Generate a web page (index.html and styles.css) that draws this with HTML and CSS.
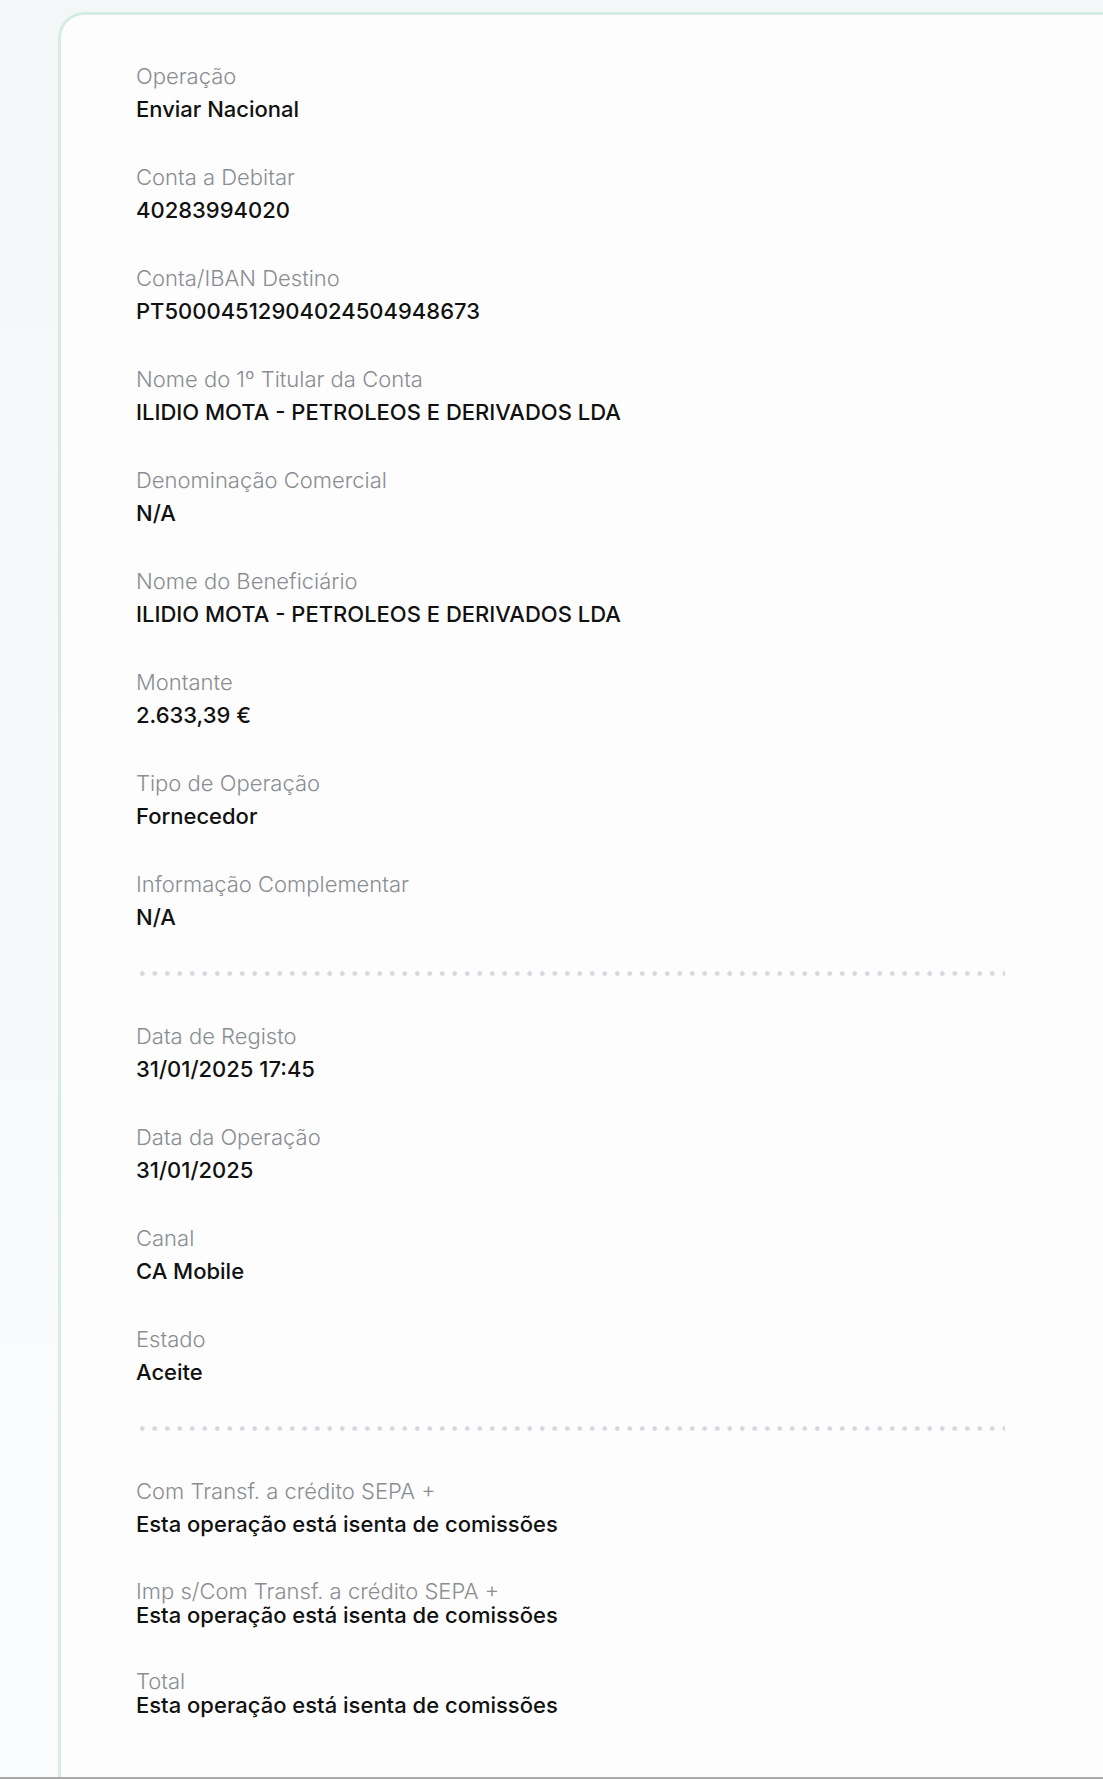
FILE: index.html
```html
<!DOCTYPE html>
<html lang="pt">
<head>
  <meta charset="UTF-8">
  <meta name="viewport" content="width=device-width, initial-scale=1.0">
  <title>Detalhe da Operação</title>
  <link rel="stylesheet" href="styles.css">
</head>
<body>

<div class="details-card">

  <div class="detail">
    <p class="label">Operação</p>
    <p class="value">Enviar Nacional</p>
  </div>
  <div class="detail">
    <p class="label">Conta a Debitar</p>
    <p class="value">40283994020</p>
  </div>
  <div class="detail">
    <p class="label">Conta/IBAN Destino</p>
    <p class="value">PT50004512904024504948673</p>
  </div>
  <div class="detail">
    <p class="label">Nome do 1º Titular da Conta</p>
    <p class="value">ILIDIO MOTA - PETROLEOS E DERIVADOS LDA</p>
  </div>
  <div class="detail">
    <p class="label">Denominação Comercial</p>
    <p class="value">N/A</p>
  </div>
  <div class="detail">
    <p class="label">Nome do Beneficiário</p>
    <p class="value">ILIDIO MOTA - PETROLEOS E DERIVADOS LDA</p>
  </div>
  <div class="detail">
    <p class="label">Montante</p>
    <p class="value">2.633,39 €</p>
  </div>
  <div class="detail">
    <p class="label">Tipo de Operação</p>
    <p class="value">Fornecedor</p>
  </div>
  <div class="detail">
    <p class="label">Informação Complementar</p>
    <p class="value">N/A</p>
  </div>

  <div class="separator"></div>

  <div class="detail">
    <p class="label">Data de Registo</p>
    <p class="value">31/01/2025 17:45</p>
  </div>
  <div class="detail">
    <p class="label">Data da Operação</p>
    <p class="value">31/01/2025</p>
  </div>
  <div class="detail">
    <p class="label">Canal</p>
    <p class="value">CA Mobile</p>
  </div>
  <div class="detail">
    <p class="label">Estado</p>
    <p class="value">Aceite</p>
  </div>

  <div class="separator"></div>

  <div class="detail">
    <p class="label">Com Transf. a crédito SEPA +</p>
    <p class="value">Esta operação está isenta de comissões</p>
  </div>
  <div class="detail tight">
    <p class="label">Imp s/Com Transf. a crédito SEPA +</p>
    <p class="value">Esta operação está isenta de comissões</p>
  </div>
  <div class="detail tight">
    <p class="label">Total</p>
    <p class="value">Esta operação está isenta de comissões</p>
  </div>

</div>

</body>
</html>
```

FILE: styles.css
```css
body {
  font-family: Inter, "Noto Sans", Arial, sans-serif;
  margin: 0;
  height: 1779px;
  overflow: hidden;
  box-sizing: border-box;
  padding: 12px 0 0 58px;
  border-bottom: 2px solid #a9a9a9;
  background: linear-gradient(180deg, #f4f7f8 0%, #f6fafb 40%, #fafbfc 100%);
}

.details-card {
  height: 100%;
  box-sizing: border-box;
  padding: 48px 0 0 75px;
  background: #fdfdfd;
  border: 3px solid #d6ece2;
  border-right: none;
  border-bottom: none;
  border-radius: 26px 0 0 0;
}

.detail {
  width: 869px;
  margin-bottom: 42px;
}

.detail p {
  margin: 0;
  font-size: 22px;
  line-height: 26px;
}

.label {
  color: #8a8d93;
  font-weight: 300;
}

.value {
  color: #111;
  font-weight: 500;
  margin-top: 7px !important;
}

.detail.tight p {
  line-height: 24px;
}

.detail.tight .value {
  margin-top: 0 !important;
}

.separator {
  width: 869px;
  height: 5px;
  margin: -1px 0 47px 0;
  background-image: radial-gradient(circle, #d5d9df 2px, transparent 2.6px);
  background-size: 12.5px 5px;
  background-repeat: repeat-x;
}
```
